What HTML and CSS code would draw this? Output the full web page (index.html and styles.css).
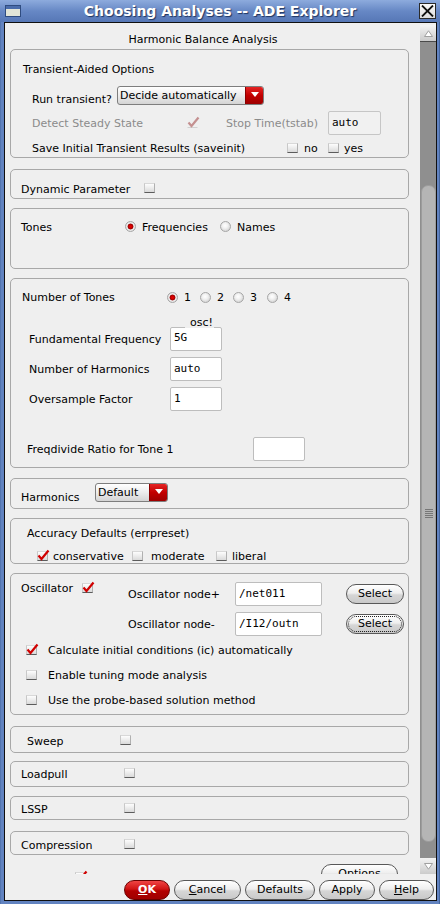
FILE: index.html
```html
<!DOCTYPE html>
<html lang="en">
<head>
<meta charset="utf-8">
<title>Choosing Analyses -- ADE Explorer</title>
<link rel="stylesheet" href="styles.css">
</head>
<body>
<div class="window">
  <header class="titlebar">
    <span class="win-icon"></span>
    <span class="title">Choosing Analyses -- ADE Explorer</span>
    <span class="close-btn"><svg width="13" height="12" viewBox="0 0 13 12"><path d="M1 0.5 L12 11.5 M12 0.5 L1 11.5" stroke="#111" stroke-width="1.8" fill="none"/></svg></span>
  </header>
  <div class="client">
    <div class="scroll-area">
      <div class="content">
        <div class="heading">Harmonic Balance Analysis</div>

        <section class="group g-trans">
          <div class="row r-title"><span class="lbl">Transient-Aided Options</span></div>
          <div class="row r-run">
            <span class="lbl w-run">Run transient?</span>
            <span class="dropdown dd-run"><span class="dd-text">Decide automatically</span><span class="dd-arrow"><svg width="8" height="5" viewBox="0 0 8 5"><path d="M0 0H8L4 5Z" fill="#fff"/></svg></span></span>
          </div>
          <div class="row r-detect">
            <span class="lbl dis w-detect">Detect Steady State</span>
            <span class="cb dis on"><svg class="chk" width="13" height="13" viewBox="0 0 13 13"><path d="M1.5 6.5 L4.5 10 L11.5 1.5" stroke="#c49090" stroke-width="2.2" fill="none"/></svg></span>
            <span class="lbl dis w-stop">Stop Time(tstab)</span>
            <span class="fld dis f-stop">auto</span>
          </div>
          <div class="row r-save">
            <span class="lbl w-save">Save Initial Transient Results (saveinit)</span>
            <span class="cb"></span><span class="lbl w-no">no</span>
            <span class="cb"></span><span class="lbl w-yes">yes</span>
          </div>
        </section>

        <section class="group g-dyn">
          <div class="row r-sec">
            <span class="lbl w-dyn">Dynamic Parameter</span>
            <span class="cb"></span>
          </div>
        </section>

        <section class="group g-tones">
          <div class="row r-sec">
            <span class="lbl w-tones">Tones</span>
            <span class="rb on"></span><span class="lbl t-freq">Frequencies</span>
            <span class="rb"></span><span class="lbl t-names">Names</span>
          </div>
        </section>

        <section class="group g-num">
          <div class="row r-ntones">
            <span class="lbl w-ntones">Number of Tones</span>
            <span class="rb on"></span><span class="lbl rt">1</span>
            <span class="rb"></span><span class="lbl rt">2</span>
            <span class="rb"></span><span class="lbl rt wide">3</span>
            <span class="rb"></span><span class="lbl rt">4</span>
          </div>
          <div class="row r-field r-fund">
            <span class="lbl w-field">Fundamental Frequency</span>
            <span class="fld fld-s osc"><span class="legend">osc!</span><span class="val">5G</span></span>
          </div>
          <div class="row r-field">
            <span class="lbl w-field">Number of Harmonics</span>
            <span class="fld fld-s">auto</span>
          </div>
          <div class="row r-field">
            <span class="lbl w-field">Oversample Factor</span>
            <span class="fld fld-s">1</span>
          </div>
          <div class="row r-freqdiv">
            <span class="lbl w-freqdiv">Freqdivide Ratio for Tone 1</span>
            <span class="fld fld-s"></span>
          </div>
        </section>

        <section class="group g-harm">
          <div class="row r-harm">
            <span class="lbl w-harm">Harmonics</span>
            <span class="dropdown dd-harm"><span class="dd-text">Default</span><span class="dd-arrow"><svg width="8" height="5" viewBox="0 0 8 5"><path d="M0 0H8L4 5Z" fill="#fff"/></svg></span></span>
          </div>
        </section>

        <section class="group g-acc">
          <div class="row r-acc-title"><span class="lbl">Accuracy Defaults (errpreset)</span></div>
          <div class="row r-acc">
            <span class="cb on"><svg class="chk" width="13" height="13" viewBox="0 0 13 13"><path d="M1.5 6.5 L4.5 10 L11.5 1.5" stroke="#d00000" stroke-width="2.2" fill="none"/></svg></span><span class="lbl t-cons">conservative</span>
            <span class="cb"></span><span class="lbl t-mod">moderate</span>
            <span class="cb"></span><span class="lbl t-lib">liberal</span>
          </div>
        </section>

        <section class="group g-osc">
          <div class="osc-top">
            <div class="osc-left">
              <span class="lbl w-osc">Oscillator</span>
              <span class="cb on"><svg class="chk" width="13" height="13" viewBox="0 0 13 13"><path d="M1.5 6.5 L4.5 10 L11.5 1.5" stroke="#d00000" stroke-width="2.2" fill="none"/></svg></span>
            </div>
            <div class="osc-right">
              <div class="row r-node">
                <span class="lbl w-node">Oscillator node+</span>
                <span class="fld fld-node">/net011</span>
                <span class="btn btn-select">Select</span>
              </div>
              <div class="row r-node">
                <span class="lbl w-node">Oscillator node-</span>
                <span class="fld fld-node">/I12/outn</span>
                <span class="btn btn-select btn-focus">Select</span>
              </div>
            </div>
          </div>
          <div class="row r-opt first">
            <span class="cb on"><svg class="chk" width="13" height="13" viewBox="0 0 13 13"><path d="M1.5 6.5 L4.5 10 L11.5 1.5" stroke="#d00000" stroke-width="2.2" fill="none"/></svg></span><span class="lbl t-opt">Calculate initial conditions (ic) automatically</span>
          </div>
          <div class="row r-opt">
            <span class="cb"></span><span class="lbl t-opt">Enable tuning mode analysis</span>
          </div>
          <div class="row r-opt">
            <span class="cb"></span><span class="lbl t-opt">Use the probe-based solution method</span>
          </div>
        </section>

        <section class="group g-sweep">
          <div class="row r-sweep">
            <span class="lbl w-sweep">Sweep</span>
            <span class="cb"></span>
          </div>
        </section>

        <section class="group g-load">
          <div class="row r-sec">
            <span class="lbl w-sec">Loadpull</span>
            <span class="cb"></span>
          </div>
        </section>

        <section class="group g-lssp">
          <div class="row r-sec">
            <span class="lbl w-sec">LSSP</span>
            <span class="cb"></span>
          </div>
        </section>

        <section class="group g-comp">
          <div class="row r-sec">
            <span class="lbl w-sec">Compression</span>
            <span class="cb"></span>
          </div>
        </section>

        <div class="row r-more">
          <span class="cb on"><svg class="chk" width="13" height="13" viewBox="0 0 13 13"><path d="M1.5 6.5 L4.5 10 L11.5 1.5" stroke="#d00000" stroke-width="2.2" fill="none"/></svg></span>
          <span class="btn btn-options">Options</span>
        </div>
      </div>

      <div class="scrollbar">
        <div class="sb-btn sb-up"><svg width="9" height="7" viewBox="0 0 9 7"><path d="M0.5 6.5 L4.5 0.8 L8.5 6.5 Z" fill="#fff" stroke="#a0a0a0"/></svg></div>
        <div class="sb-track">
          <div class="sb-thumb"><span class="grip"></span></div>
        </div>
        <div class="sb-btn sb-down"><svg width="9" height="7" viewBox="0 0 9 7"><path d="M0.5 0.5 L8.5 0.5 L4.5 6.2 Z" fill="#fff" stroke="#a0a0a0"/></svg></div>
      </div>
    </div>

    <div class="button-bar">
      <span class="btn b-ok"><u>O</u>K</span>
      <span class="btn b-cancel"><u>C</u>ancel</span>
      <span class="btn b-def">Defaults</span>
      <span class="btn b-apply">Apply</span>
      <span class="btn b-help"><u>H</u>elp</span>
    </div>
  </div>
</div>
</body>
</html>
```

FILE: styles.css
```css
* { box-sizing: border-box; }
html, body { margin: 0; padding: 0; }
body {
  width: 440px; height: 904px; overflow: hidden;
  background: #5f80bd;
  font-family: "DejaVu Sans", "Noto Sans", sans-serif;
  font-size: 11px; line-height: 14px; color: #000;
}
.window {
  width: 440px; height: 904px;
  display: flex; flex-direction: column;
  background: linear-gradient(90deg, #46679f 0, #6283c0 1px, #6283c0 439px, #46679f 439px);
}

/* title bar */
.titlebar {
  height: 22px; flex-shrink: 0;
  display: flex; align-items: center;
  background: linear-gradient(#8dabdd, #6788c5 50%, #5677b6);
}
.win-icon {
  width: 16px; height: 12px; margin-left: 5px; flex-shrink: 0;
  border: 1px solid #2f4c80;
  background: linear-gradient(#4a6cab 0, #4a6cab 3px, #e2e5d8 3px);
}
.title {
  flex: 1; text-align: center;
  color: #fff; font-weight: bold; font-size: 14px; line-height: 22px;
  text-shadow: 1px 1px 1px #1f3561;
  white-space: nowrap;
}
.close-btn {
  width: 17px; height: 16px; margin-right: 4px; flex-shrink: 0;
  border: 1px solid #2a2a2a;
  background: linear-gradient(#fbfbfb, #dcdcdc);
  display: flex; align-items: center; justify-content: center;
}

/* client */
.client {
  flex: 1; min-height: 0;
  margin: 0 3px 3px 4px;
  border: 1px solid #101010;
  background: #efefef;
  display: flex; flex-direction: column;
}
.scroll-area { height: 851px; flex-shrink: 0; display: flex; }
.content {
  width: 415px; height: 851px; overflow: hidden; flex-shrink: 0;
  display: flex; flex-direction: column;
}
.heading {
  height: 26px; flex-shrink: 0;
  padding: 10px 19px 0 0;
  text-align: center; white-space: nowrap;
}

/* groups */
.group {
  margin-left: 5px; width: 399px; flex-shrink: 0;
  border: 1px solid #a8a8a8; border-radius: 5px;
  display: flex; flex-direction: column;
}
.g-trans { height: 109px; padding-top: 12px; }
.g-dyn   { margin-top: 11px; height: 30px; padding-top: 12px; }
.g-tones { margin-top: 9px; height: 61px; padding-top: 11px; }
.g-num   { margin-top: 9px; height: 190px; padding-top: 11px; }
.g-harm  { margin-top: 10px; height: 31px; padding-top: 4px; }
.g-acc   { margin-top: 9px; height: 46px; padding-top: 7px; }
.g-osc   { margin-top: 9px; height: 142px; }
.g-sweep { margin-top: 11px; height: 27px; padding-top: 7px; }
.g-load  { margin-top: 8px; height: 26px; padding-top: 5px; }
.g-lssp  { margin-top: 9px; height: 24px; padding-top: 5px; }
.g-comp  { margin-top: 11px; height: 24px; padding-top: 6px; }

.row { display: flex; align-items: center; flex-shrink: 0; }
/* labels: 2px top padding inside a centred row nudges glyphs 1px down */
.lbl { white-space: nowrap; flex-shrink: 0; padding-top: 2px; }
.dis { color: #8b8b8b; }

/* transient group */
.r-title { padding-left: 12px; height: 14px; }
.r-run { padding-left: 21px; margin-top: 10px; height: 19px; align-items: flex-start; }
.w-run { width: 85px; padding-top: 7px; }
.dd-run { width: 147px; }
.r-detect { padding-left: 21px; margin-top: 6px; height: 24px; }
.w-detect { width: 155px; }
.w-stop { width: 102px; margin-left: 28px; }
.f-stop { width: 53px; padding-left: 4px; }
.r-save { padding-left: 21px; margin-top: 6px; height: 14px; }
.w-save { width: 255px; }
.w-no { width: 24px; margin-left: 6px; }
.w-yes { margin-left: 5px; }

/* simple section rows */
.r-sec { padding-left: 10px; height: 14px; }
.r-sec .cb, .r-sweep .cb { margin-bottom: 2px; }
.r-sec .rb { margin-bottom: 2px; }
.w-dyn { width: 123px; }
.w-tones { width: 104px; }
.t-freq { margin-left: 6px; width: 78px; }
.t-names { margin-left: 6px; }
.w-sec { width: 103px; }
.r-sweep { padding-left: 16px; height: 14px; }
.w-sweep { width: 93px; }

/* number of tones group */
.r-ntones { padding-left: 11px; height: 14px; }
.w-ntones { width: 145px; }
.rt { margin-left: 6px; width: 16px; }
.rt.wide { width: 17px; }
.r-field { padding-left: 18px; height: 24px; margin-top: 6px; }
.r-fund { margin-top: 23px; }
.w-field { width: 141px; }
.fld-s { width: 52px; }
.r-freqdiv { padding-left: 16px; margin-top: 26px; height: 24px; }
.w-freqdiv { width: 226px; }

/* harmonics */
.r-harm { padding-left: 10px; height: 19px; align-items: flex-start; }
.w-harm { width: 74px; padding-top: 8px; }
.dd-harm { width: 73px; }

/* accuracy */
.r-acc-title { padding-left: 16px; height: 14px; }
.r-acc { padding-left: 26px; margin-top: 9px; height: 14px; }
.t-cons { margin-left: 5px; width: 79px; }
.t-mod { margin-left: 8px; width: 65px; }
.t-lib { margin-left: 5px; }

/* oscillator */
.osc-top { display: flex; flex-shrink: 0; }
.osc-left { width: 117px; padding: 7px 0 0 10px; display: flex; align-items: flex-start; }
.w-osc { width: 61px; padding-top: 1px; }
.osc-left .cb { margin-top: 2px; }
.osc-right { padding-top: 8px; display: flex; flex-direction: column; }
.r-node { height: 24px; }
.r-node + .r-node { margin-top: 6px; }
.w-node { width: 107px; }
.fld-node { width: 87px; }
.btn-select { margin-left: 24px; width: 58px; height: 21px; line-height: 19px; }
.r-opt { padding-left: 15px; height: 14px; margin-top: 11px; }
.r-opt.first { margin-top: 7px; }
.t-opt { margin-left: 11px; }

/* partially visible row */
.r-more { margin-top: 9px; padding-left: 70px; align-items: flex-start; }
.r-more .cb { margin-top: 8px; }
.btn-options { margin-left: 235px; width: 77px; height: 21px; line-height: 19px; }

/* widgets */
.cb {
  width: 11px; height: 10px; flex-shrink: 0; position: relative;
  border: 1px solid; border-color: #d8d8d8 #b0b0b0 #5c5c5c #c8c8c8;
  background: linear-gradient(#fdfdfd, #dadada);
}
.cb.dis { border-color: #efefef #efefef #d0d0d0 #efefef; background: #efefef; }
.cb .chk { position: absolute; left: -1px; top: -3px; }

.rb {
  width: 11px; height: 11px; flex-shrink: 0; border-radius: 50%;
  border: 1px solid #a6a6a6;
  background: radial-gradient(circle at 45% 40%, #ffffff 0, #f2f2f2 35%, #c6c6c6 100%);
}
.rb.on {
  background: radial-gradient(circle at 50% 50%, #e80000 0, #c80000 1.8px, #8a0000 2.6px, #f6f6f6 3.3px, #e8e8e8 4px, #c2c2c2 100%);
}

.fld {
  height: 24px; flex-shrink: 0;
  background: #fff;
  border: 1px solid #bdbdbd; border-radius: 2px;
  font-family: "DejaVu Sans Mono", "Liberation Mono", monospace;
  font-size: 11px; line-height: 14px;
  padding: 4px 0 0 3px; white-space: nowrap;
}
.fld.dis { background: #f1f1f1; border-color: #c6c6c6; color: #000; }
.fld.osc { padding-top: 0; }
.legend {
  display: block; margin: -11px 0 0 11px;
  width: 29px; height: 11px;
  background: #efefef;
  font-family: "DejaVu Sans", sans-serif; line-height: 11px;
  text-align: right; padding-right: 1px;
}
.fld.osc .val { display: block; padding-top: 3px; }

.dropdown {
  height: 19px; flex-shrink: 0; display: flex;
  border: 1px solid #7e7e7e; border-radius: 3px; overflow: hidden;
  background: linear-gradient(#ffffff, #ececec 50%, #d4d4d4);
}
.dd-text { flex: 1; padding-left: 2px; line-height: 17px; white-space: nowrap; }
.dd-arrow {
  width: 18px; flex-shrink: 0;
  display: flex; align-items: center; justify-content: center; padding-bottom: 2px;
  background: linear-gradient(#e52424, #c20000 50%, #9e0000);
  border-left: 1px solid #8a0000;
}

.btn {
  height: 20px; flex-shrink: 0; display: block;
  border: 1px solid #585858; border-radius: 10px;
  background: linear-gradient(#ffffff, #eeeeee 45%, #d6d6d6 55%, #c9c9c9);
  font-size: 11px; line-height: 18px; text-align: center; white-space: nowrap; color: #000;
}
.btn-focus { outline: 1px dotted #222; outline-offset: -3px; }

/* button bar */
.button-bar {
  height: 26px; flex-shrink: 0;
  display: flex; justify-content: flex-end; align-items: flex-start;
  gap: 4px; padding: 6px 2px 0 0;
}
.b-ok {
  width: 46px; color: #fff; font-weight: bold;
  border-color: #6a0000;
  background: linear-gradient(#f04444, #d01414 45%, #b20000 55%, #a00000);
}
.b-cancel { width: 67px; }
.b-def { width: 70px; }
.b-apply { width: 56px; }
.b-help { width: 55px; }

/* scrollbar */
.scrollbar {
  width: 16px; flex-shrink: 0;
  display: flex; flex-direction: column;
  padding-top: 2px;
}
.sb-btn {
  height: 16px; flex-shrink: 0;
  display: flex; align-items: center; justify-content: center;
  background: linear-gradient(#f4f4f4, #cbcbcb);
}
.sb-up { height: 17px; border-bottom: 1px solid #4a4a4a; }
.sb-track {
  flex: 1; background: #8f8f8f;
  display: flex; flex-direction: column; align-items: flex-end;
}
.sb-thumb {
  margin-top: 143px; width: 15px; height: 657px;
  border-radius: 7px; border: 1px solid #9c9c9c;
  background: #b5b5b5;
  display: flex; align-items: center; justify-content: center;
}
.grip {
  width: 8px; height: 9px;
  background: repeating-linear-gradient(#777 0, #777 1px, transparent 1px, transparent 2px);
}
```
